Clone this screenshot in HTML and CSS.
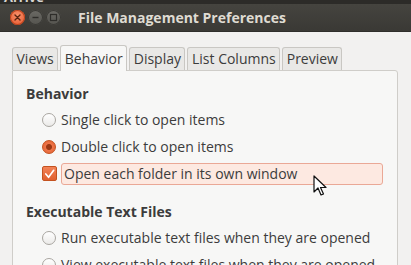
FILE: index.html
```html
<!DOCTYPE html>
<html lang="en">
<head>
    <meta charset="UTF-8">
    <title>File Management Preferences</title>
    <link rel="stylesheet" href="styles.css">
</head>
<body>
    <div id="window">
        <div class="top-strip"><span>Arrive</span></div>
        <div class="titlebar">
            <div class="controls">
                <span class="ctl close">
                    <svg width="15" height="15" viewBox="0 0 15 15"><path d="M5 5 L10 10 M10 5 L5 10" stroke="#5a2410" stroke-width="1.4" stroke-linecap="round"/></svg>
                </span>
                <span class="ctl">
                    <svg width="15" height="15" viewBox="0 0 15 15"><path d="M4.5 7.5 H10.5" stroke="#2e2d2a" stroke-width="1.4"/></svg>
                </span>
                <span class="ctl">
                    <svg width="15" height="15" viewBox="0 0 15 15"><rect x="4.5" y="4.5" width="6" height="6" fill="none" stroke="#2e2d2a" stroke-width="1.2"/></svg>
                </span>
            </div>
            <div class="title">File Management Preferences</div>
        </div>

        <div class="content">
            <div class="tabs">
                <div class="tab">Views</div>
                <div class="tab active">Behavior</div>
                <div class="tab">Display</div>
                <div class="tab">List Columns</div>
                <div class="tab">Preview</div>
            </div>

            <div class="panel">
                <div class="heading">Behavior</div>
                <div class="option">
                    <span class="radio"></span>
                    <span class="label">Single click to open items</span>
                </div>
                <div class="option">
                    <span class="radio checked"></span>
                    <span class="label">Double click to open items</span>
                </div>
                <div class="option">
                    <span class="check">
                        <svg width="14" height="14" viewBox="0 0 14 14"><path d="M3 7 L6 10.5 L11.5 3" fill="none" stroke="#fff" stroke-width="1.8" stroke-linecap="round" stroke-linejoin="round"/></svg>
                    </span>
                    <span class="label focus">Open each folder in its own window</span>
                </div>

                <div class="heading section">Executable Text Files</div>
                <div class="option">
                    <span class="radio"></span>
                    <span class="label">Run executable text files when they are opened</span>
                </div>
                <div class="option">
                    <span class="radio"></span>
                    <span class="label">View executable text files when they are opened</span>
                </div>
            </div>
        </div>

        <svg class="cursor" width="16" height="22" viewBox="0 0 16 22">
            <path d="M1 1 L1 17 L5 13 L8 20 L10.5 19 L7.5 12.5 L13 12.5 Z" fill="#fff" stroke="#111" stroke-width="1.2" stroke-linejoin="round"/>
        </svg>
    </div>
</body>
</html>
```

FILE: styles.css
```css
body {
    margin: 0;
    font-family: "Open Sans", "DejaVu Sans", sans-serif;
    color: #3c3c3c;
    background-color: #f2f1f0;
}

#window {
    position: relative;
    width: 411px;
    height: 265px;
    overflow: hidden;
    background-color: #f2f1f0;
}

.top-strip {
    height: 4px;
    overflow: hidden;
    background-color: #2c2b28;
}

.top-strip span {
    display: block;
    margin: -9px 0 0 4px;
    font-size: 13px;
    font-weight: bold;
    line-height: 12px;
    color: #d8d5cf;
}

.titlebar {
    display: flex;
    align-items: center;
    height: 27px;
    padding-left: 10px;
    background: linear-gradient(#45443f, #3a3935);
    border-bottom: 1px solid #2f2e2b;
}

.controls {
    display: flex;
    gap: 3px;
}

.ctl {
    display: block;
    width: 15px;
    height: 15px;
    border-radius: 50%;
    background: linear-gradient(#6b6a65, #55544f);
    box-shadow: inset 0 0 0 1px #3a3935;
}

.ctl svg {
    display: block;
}

.ctl.close {
    background: radial-gradient(circle at 50% 35%, #f8906a, #e4542a);
    box-shadow: inset 0 0 0 1px #b9431d;
}

.title {
    margin-left: 17px;
    font-size: 14px;
    font-weight: bold;
    color: #dfdbd2;
}

.content {
    padding: 13px 13px 0 12px;
}

.tabs {
    display: flex;
    align-items: flex-end;
    gap: 2px;
    height: 25px;
}

.tab {
    height: 22px;
    line-height: 22px;
    padding: 0 3.5px;
    font-size: 14px;
    background-color: #e9e8e6;
    border: 1px solid #c9c7c3;
    border-bottom: none;
    border-radius: 3px 3px 0 0;
}

.tab.active {
    height: 25px;
    line-height: 25px;
    margin-bottom: -1px;
    background-color: #f7f7f6;
    position: relative;
}

.panel {
    height: 220px;
    padding: 11px 0 0 13px;
    background-color: #f7f7f6;
    border: 1px solid #cfcdc9;
    border-radius: 0 3px 0 0;
}

.heading {
    height: 24px;
    line-height: 24px;
    font-size: 14px;
    font-weight: bold;
}

.heading.section {
    margin-top: 13px;
}

.option {
    display: flex;
    align-items: center;
    height: 27px;
    padding-left: 16px;
    font-size: 14px;
}

.radio {
    width: 12px;
    height: 12px;
    border-radius: 50%;
    border: 1px solid #a9a6a1;
    background: linear-gradient(#ffffff, #ebeae8);
    margin-right: 5px;
}

.radio.checked {
    border-color: #c4521f;
    background: radial-gradient(circle, #9a3814 0, #9a3814 2.5px, #ee7448 3.5px, #e0602f 100%);
}

.check {
    display: flex;
    width: 13px;
    height: 13px;
    border: 1px solid #c4521f;
    border-radius: 2px;
    background: linear-gradient(#f28256, #e0602f);
    margin-right: 4px;
}

.check svg {
    display: block;
}

.label {
    white-space: nowrap;
}

.label.focus {
    width: 318px;
    height: 20px;
    line-height: 20px;
    padding-left: 2px;
    background-color: #fde9e1;
    border: 1px solid #eaa896;
    border-radius: 3px;
}

.cursor {
    position: absolute;
    left: 313px;
    top: 175px;
}
```
